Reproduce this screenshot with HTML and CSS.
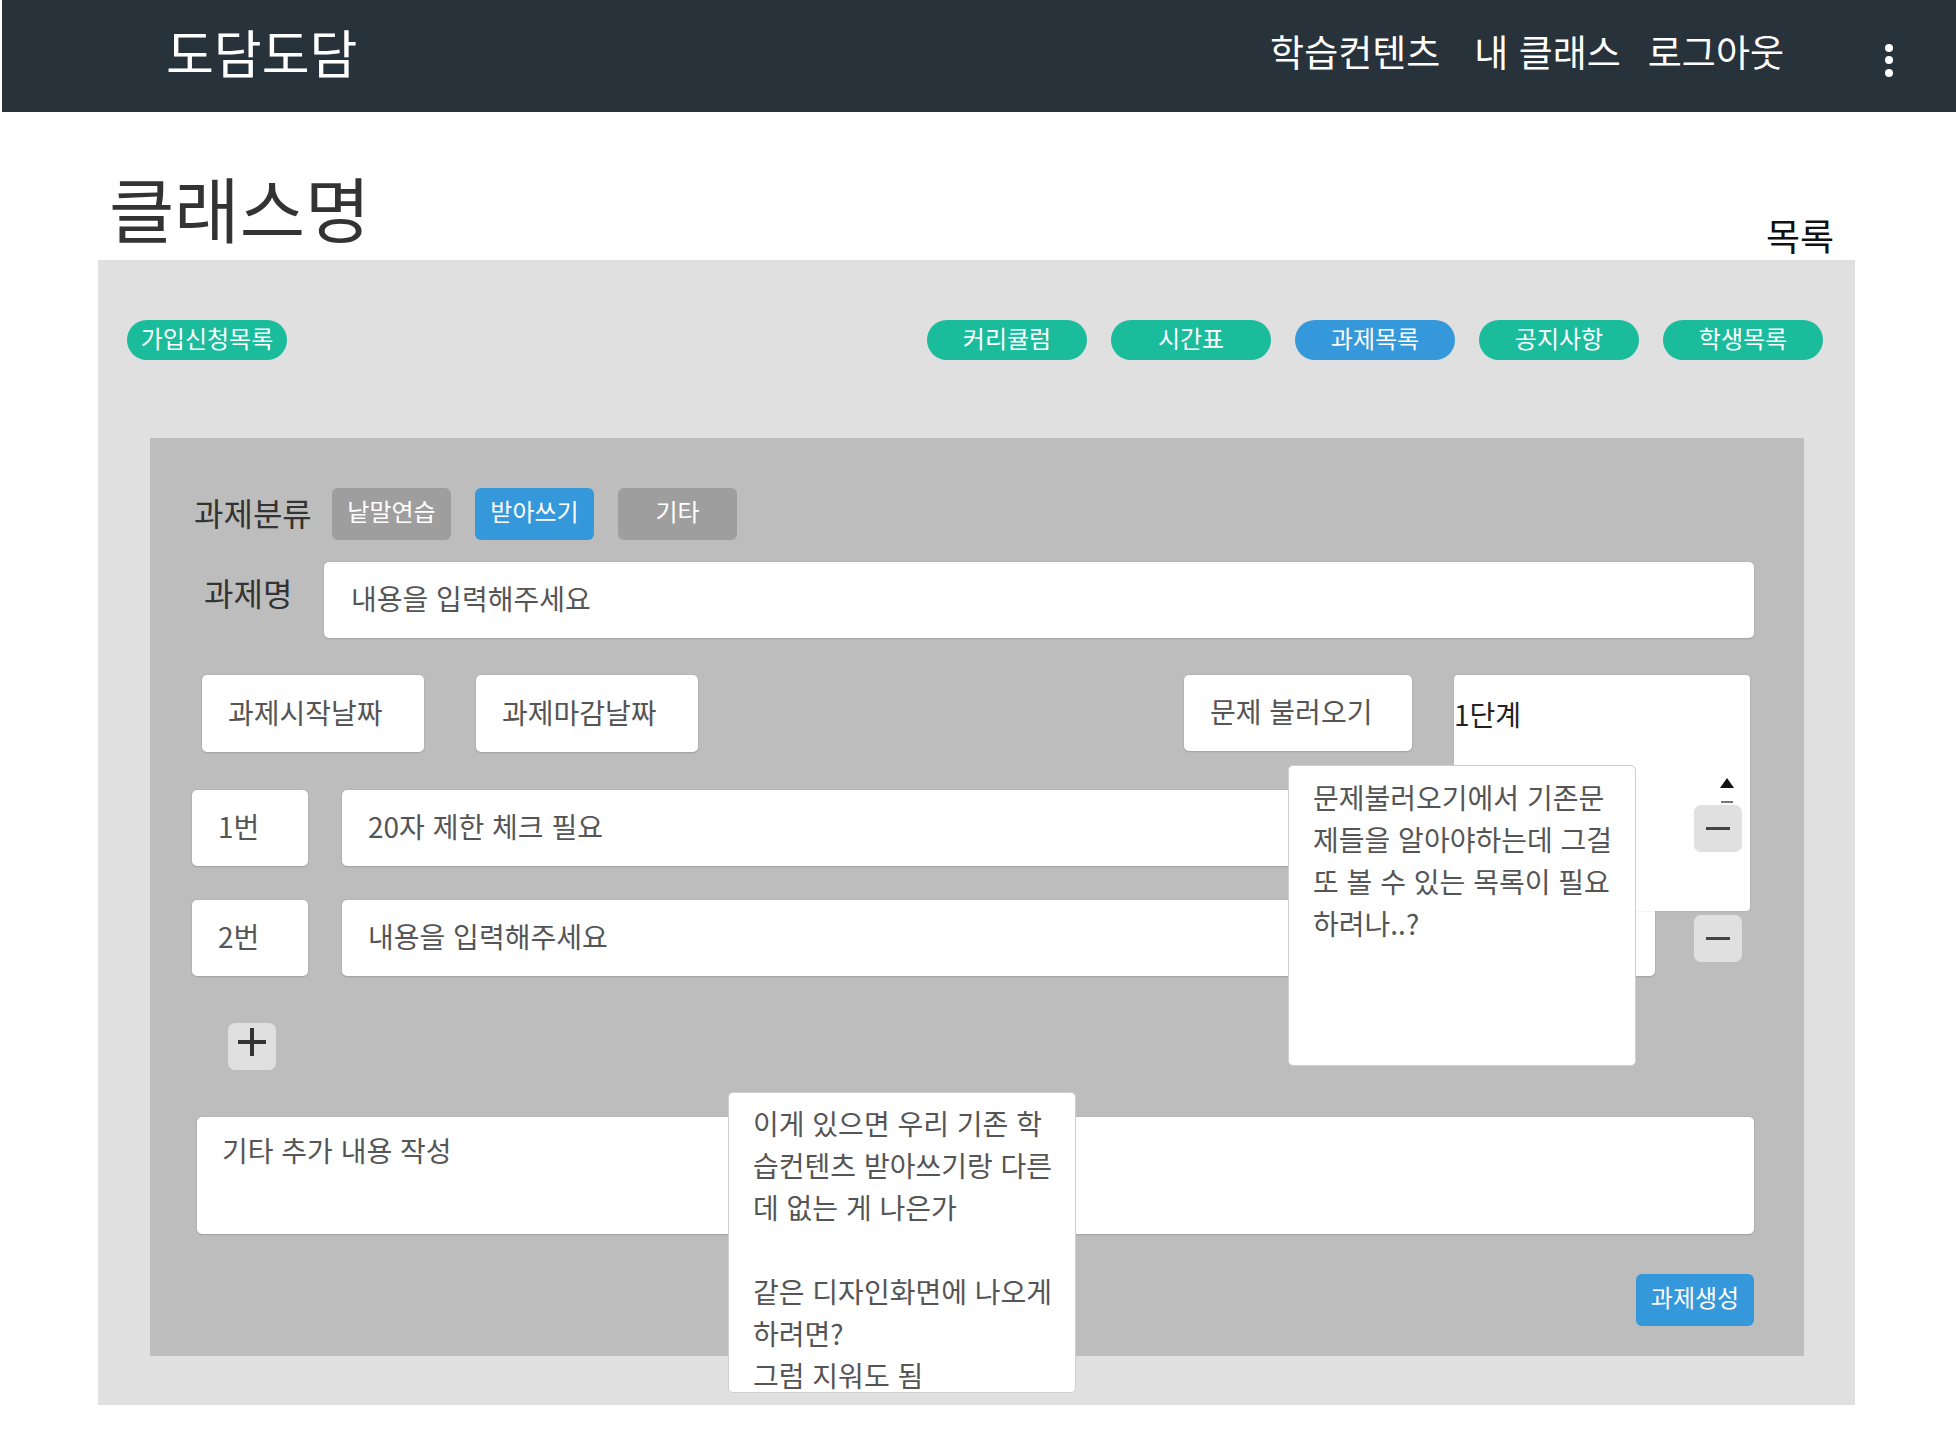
FILE: index.html
```html
<!DOCTYPE html>
<html lang="ko">
<head>
<meta charset="utf-8">
<title>도담도담</title>
<link rel="stylesheet" href="styles.css">
</head>
<body>
<header class="topbar">
  <div class="logo">도담도담</div>
  <nav class="nav">
    <a class="nav-link">학습컨텐츠</a>
    <a class="nav-link">내 클래스</a>
    <a class="nav-link nav-last">로그아웃</a>
  </nav>
  <div class="kebab"><span></span><span></span><span></span></div>
</header>

<main class="page">
  <div class="title-row">
    <h1 class="class-title">클래스명</h1>
    <a class="list-link">목록</a>
  </div>

  <section class="board">
    <div class="pill-row">
      <button class="pill">가입신청목록</button>
      <div class="pill-group">
        <button class="pill">커리큘럼</button>
        <button class="pill">시간표</button>
        <button class="pill pill-active">과제목록</button>
        <button class="pill">공지사항</button>
        <button class="pill">학생목록</button>
      </div>
    </div>

    <div class="panel">
      <div class="cat-row">
        <span class="label cat-label">과제분류</span>
        <button class="cat-btn">낱말연습</button>
        <button class="cat-btn cat-active">받아쓰기</button>
        <button class="cat-btn">기타</button>
      </div>

      <div class="name-row">
        <span class="label name-label">과제명</span>
        <div class="field name-field">내용을 입력해주세요</div>
      </div>

      <div class="date-row">
        <div class="field date-btn">과제시작날짜</div>
        <div class="field date-btn">과제마감날짜</div>
        <div class="field load-btn">문제 불러오기</div>
        <div class="level-box">
          <span class="level-text">1단계</span>
          <span class="scroll-up"></span>
          <span class="scroll-dash"></span>
        </div>
      </div>

      <div class="q-row">
        <div class="field q-num">1번</div>
        <div class="field q-input">20자 제한 체크 필요</div>
        <button class="sq-btn"><span class="minus"></span></button>
      </div>

      <div class="q-row q-row2">
        <div class="field q-num">2번</div>
        <div class="field q-input">내용을 입력해주세요</div>
        <button class="sq-btn"><span class="minus"></span></button>
      </div>

      <button class="sq-btn add-btn"><span class="plus-h"></span><span class="plus-v"></span></button>

      <div class="field extra-field">기타 추가 내용 작성</div>

      <div class="submit-row">
        <button class="submit-btn">과제생성</button>
      </div>

      <div class="note note-a">문제불러오기에서 기존문<br>제들을 알아야하는데 그걸<br>또 볼 수 있는 목록이 필요<br>하려나..?</div>
      <div class="note note-b">이게 있으면 우리 기존 학<br>습컨텐츠 받아쓰기랑 다른<br>데 없는 게 나은가<br><br>같은 디자인화면에 나오게<br>하려면?<br>그럼 지워도 됨</div>
    </div>
  </section>
</main>
</body>
</html>
```

FILE: styles.css
```css
* { box-sizing: border-box; }

html, body {
  margin: 0;
  padding: 0;
  background: #ffffff;
  font-family: "Noto Sans CJK KR", "Noto Sans", sans-serif;
}

button {
  font-family: inherit;
  border: none;
  padding: 0;
  margin: 0;
  cursor: pointer;
}

/* ---------- header ---------- */
.topbar {
  margin-left: 2px;
  height: 112px;
  background: #28323a;
  display: flex;
  align-items: center;
  padding: 0 63px 0 164px;
}

.logo {
  color: #ffffff;
  font-size: 52px;
  line-height: 52px;
  margin-top: -8px;
}

.nav {
  margin-left: auto;
  display: flex;
  gap: 34px;
  margin-top: -10px;
}

.nav-link {
  color: #ffffff;
  font-size: 37px;
  line-height: 37px;
}

.nav-last { margin-left: -7px; }

.kebab {
  margin-left: 101px;
  display: flex;
  flex-direction: column;
  gap: 4.5px;
  margin-top: 8px;
}

.kebab span {
  width: 8px;
  height: 8px;
  border-radius: 50%;
  background: #ffffff;
}

/* ---------- page ---------- */
.page {
  margin: 0 101px 0 98px;
}

.title-row {
  height: 148px;
  display: flex;
  align-items: flex-end;
  justify-content: space-between;
  padding: 0 21px 0 11px;
}

.class-title {
  margin: 0 0 18px 0;
  font-weight: 400;
  font-size: 71px;
  line-height: 71px;
  color: #333333;
}

.list-link {
  font-size: 37px;
  line-height: 37px;
  color: #111111;
  margin-bottom: 6px;
}

.board {
  background: #e0e0e0;
  padding: 60px 0 49px 0;
}

.pill-row {
  display: flex;
  justify-content: space-between;
  padding: 0 32px 0 29px;
}

.pill-group {
  display: flex;
  gap: 24px;
}

.pill {
  width: 160px;
  height: 40px;
  border-radius: 20px;
  background: #1abc9c;
  color: #ffffff;
  font-size: 24px;
  line-height: 24px;
  padding-bottom: 5px;
  text-align: center;
}

.pill-active { background: #3498db; }

/* ---------- panel ---------- */
.panel {
  position: relative;
  margin: 78px 51px 0 52px;
  background: #bdbdbd;
  padding: 50px 50px 30px 42px;
}

.label {
  color: #333333;
  font-size: 32px;
  line-height: 32px;
}

.field {
  background: #ffffff;
  border-radius: 5px;
  box-shadow: 0 0 0 1px rgba(0, 0, 0, 0.03), 0 1px 2px rgba(0, 0, 0, 0.12);
  color: #555555;
  font-size: 28px;
  line-height: 28px;
  padding-left: 26px;
  padding-bottom: 4px;
  display: flex;
  align-items: center;
}

.cat-row {
  display: flex;
  align-items: center;
  padding-left: 2px;
}

.cat-label {
  width: 138px;
  margin-top: -4px;
}

.cat-btn {
  width: 119px;
  height: 52px;
  border-radius: 6px;
  background: #9e9e9e;
  color: #ffffff;
  font-size: 24px;
  line-height: 24px;
  padding-bottom: 6px;
  margin-right: 24px;
}

.cat-active { background: #3498db; }

.name-row {
  margin-top: 22px;
  display: flex;
  align-items: flex-start;
  padding-left: 12px;
}

.name-label {
  width: 120px;
  margin-top: 14px;
}

.name-field {
  flex: 1;
  height: 76px;
  padding-left: 27px;
}

.date-row {
  margin-top: 37px;
  height: 77px;
  display: flex;
  align-items: flex-start;
  padding: 0 4px 0 10px;
}

.date-btn {
  width: 222px;
  height: 77px;
  margin-right: 52px;
}

.load-btn {
  margin-left: auto;
  width: 228px;
  height: 76px;
}

.level-box {
  position: relative;
  margin-left: 42px;
  width: 296px;
  height: 236px;
  background: #ffffff;
  border-radius: 4px;
  box-shadow: 0 0 2px rgba(0, 0, 0, 0.15);
}

.level-text {
  display: block;
  color: #222222;
  font-size: 28px;
  line-height: 28px;
  margin-top: 25px;
}

.scroll-up {
  position: absolute;
  left: 266px;
  top: 103px;
  width: 0;
  height: 0;
  border-left: 7px solid transparent;
  border-right: 7px solid transparent;
  border-bottom: 10px solid #111111;
}

.scroll-dash {
  position: absolute;
  left: 267px;
  top: 126px;
  width: 12px;
  height: 2px;
  background: #777777;
}

.q-row {
  margin-top: 38px;
  display: flex;
  align-items: center;
  padding-right: 12px;
}

.q-row2 { margin-top: 34px; }

.q-num {
  width: 116px;
  height: 76px;
}

.q-input {
  flex: 1;
  height: 76px;
  margin-left: 34px;
}

.sq-btn {
  position: relative;
  width: 48px;
  height: 47px;
  border-radius: 7px;
  background: #e0e0e0;
  flex: none;
}

.q-row .sq-btn { margin-left: 39px; }

.minus {
  position: absolute;
  left: 12px;
  top: 22px;
  width: 24px;
  height: 3px;
  background: #444444;
}

.add-btn {
  display: block;
  margin: 47px 0 0 36px;
}

.plus-h {
  position: absolute;
  left: 10px;
  top: 17px;
  width: 28px;
  height: 4px;
  background: #333333;
}

.plus-v {
  position: absolute;
  left: 22px;
  top: 5px;
  width: 4px;
  height: 28px;
  background: #333333;
}

.extra-field {
  margin: 47px 0 0 5px;
  height: 117px;
  align-items: flex-start;
  padding: 15px 0 0 25px;
  line-height: 36px;
}

.submit-row {
  margin-top: 40px;
  display: flex;
  justify-content: flex-end;
}

.submit-btn {
  width: 118px;
  height: 52px;
  border-radius: 6px;
  background: #3498db;
  color: #ffffff;
  font-size: 24px;
  line-height: 24px;
  padding-bottom: 6px;
}

/* ---------- sticky notes (overlays) ---------- */
.note {
  position: absolute;
  width: 348px;
  height: 301px;
  background: #ffffff;
  border: 1px solid #cfcfcf;
  border-radius: 5px;
  color: #555555;
  font-size: 28px;
  line-height: 42px;
  padding: 10px 6px 0 24px;
  white-space: nowrap;
}

.note-a { left: 1138px; top: 327px; }
.note-b { left: 578px; top: 654px; padding-top: 9px; }
```
